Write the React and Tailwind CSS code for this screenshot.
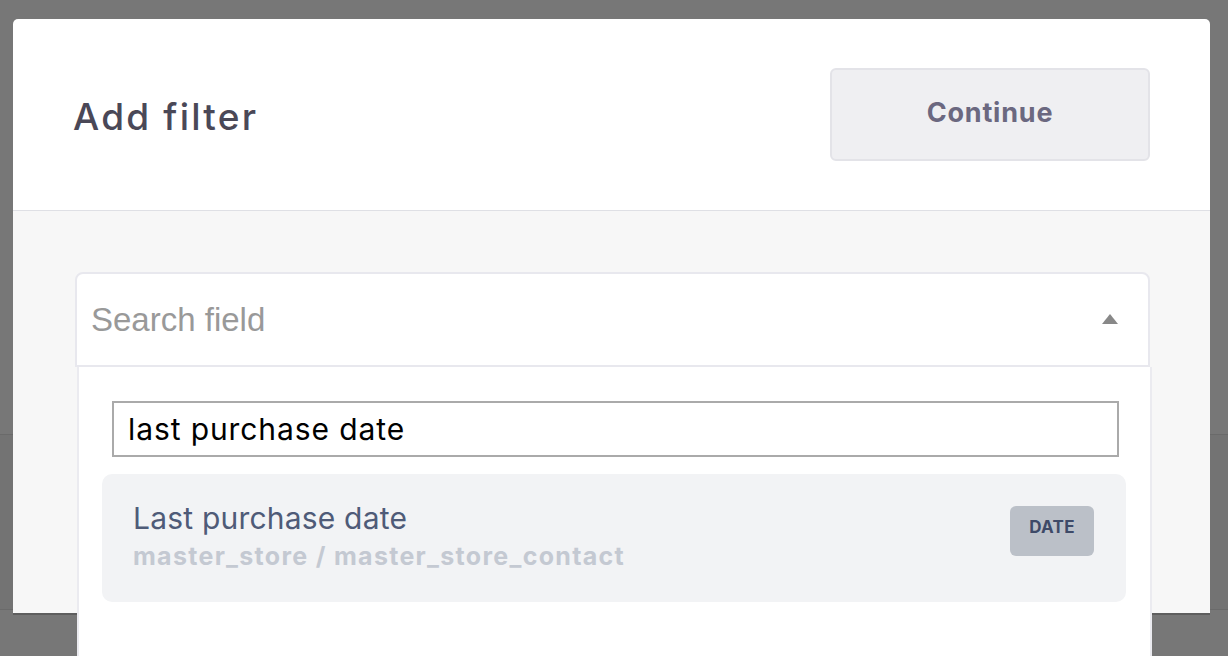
import React from "react";

export default function App() {
  return (
    <div className="relative h-[656px] w-[1228px] overflow-hidden bg-[#777777] pl-[13px] pt-[19px]" style={{ fontFamily: "Inter, 'Noto Sans', sans-serif" }}>
      <div className="pointer-events-none absolute left-0 top-[434px] h-[176px] w-full border-y border-[#6a6a6a] bg-[#737373]" />
      <div className="relative flex h-[594px] w-[1197px] flex-col rounded-t-[5px] bg-white shadow-[0_2px_0_#5e5e5e]">
        <div className="flex h-[192px] shrink-0 items-center justify-between border-b border-[#dfe0e5] pl-[60px] pr-[60px]">
          <h1 className="pt-[4px] text-[37px] font-medium tracking-[2.2px] text-[#4a4857]">Add filter</h1>
          <button className="flex h-[93px] w-[320px] items-center justify-center rounded-[6px] border-2 border-[#e3e3e8] bg-[#efeff2] pb-[2px] text-[27px] font-bold tracking-[0.8px] text-[#6b6880]">
            Continue
          </button>
        </div>
        <div className="flex-1 rounded-b-[2px] bg-[#f7f7f7] px-[62px] pt-[61px]">
          <div className="relative">
            <div className="flex h-[95px] w-[1075px] items-center justify-between rounded-t-[8px] border-2 border-[#e8e8ee] bg-white pl-[14px] pr-[30px]">
              <span className="text-[33px] text-[#999999]" style={{ fontFamily: "'Liberation Sans', Arial, sans-serif" }}>
                Search field
              </span>
              <svg width="16" height="10" viewBox="0 0 16 10" className="mb-[2px]">
                <polygon points="8,0 16,10 0,10" fill="#888888" />
              </svg>
            </div>
            <div className="absolute left-[2px] top-full h-[300px] w-[1075px] border-x-2 border-[#ebebf0] bg-white pl-[31px] pr-[32px] pt-[34px]">
              <div className="ml-[2px] flex h-[56px] w-[1007px] items-center border-2 border-[#aaaaaa] px-[14px]">
                <span className="text-[30px] tracking-[0.9px] text-black">last purchase date</span>
              </div>
              <div className="-ml-[8px] mt-[17px] flex h-[128px] w-[1024px] items-start justify-between rounded-[10px] bg-[#f2f3f5] pl-[31px] pr-[32px] pt-[25px]">
                <div className="flex flex-col">
                  <span className="text-[30px] leading-[38px] tracking-[0.2px] text-[#4f5b78]">Last purchase date</span>
                  <span className="mt-[4px] text-[25px] font-bold leading-[30px] tracking-[1.3px] text-[#c4c9d2]">master_store / master_store_contact</span>
                </div>
                <div className="mt-[7px] flex h-[50px] w-[84px] items-center justify-center rounded-[6px] bg-[#bbc0c8] pb-[6px] text-[17px] font-bold tracking-[0.3px] text-[#3e4a68]">
                  DATE
                </div>
              </div>
            </div>
          </div>
        </div>
      </div>
    </div>
  );
}
